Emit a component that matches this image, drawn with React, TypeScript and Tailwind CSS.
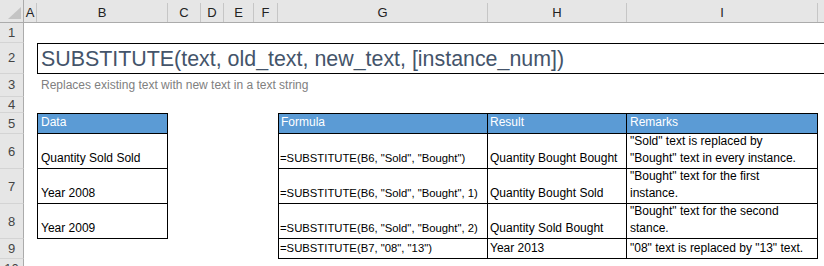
import React from "react";

const font = { fontFamily: '"Liberation Sans", Arial, sans-serif' };

const HEAD_COLS: { l: string; w: string }[] = [
  { l: "A", w: "w-[13px]" },
  { l: "B", w: "w-[131px]" },
  { l: "C", w: "w-[33px]" },
  { l: "D", w: "w-[23px]" },
  { l: "E", w: "w-[30px]" },
  { l: "F", w: "w-[24px]" },
  { l: "G", w: "w-[210px]" },
  { l: "H", w: "w-[139px]" },
  { l: "I", w: "w-[191px]" },
];

function RowHead({ n, h }: { n: number; h: string }) {
  return (
    <div
      className={`${h} w-[24px] shrink-0 bg-[#e6e6e6] border-r border-b border-r-[#ababab] border-b-[#d4d4d4] flex items-center justify-center text-[13px] text-[#444444]`}
    >
      {n}
    </div>
  );
}

function Cell({
  w,
  cls = "",
  children,
}: {
  w: string;
  cls?: string;
  children?: React.ReactNode;
}) {
  return (
    <div
      className={`${w} shrink-0 h-full flex flex-col justify-end overflow-hidden whitespace-nowrap ${cls}`}
    >
      {children}
    </div>
  );
}

const tb = "border-black";

export default function App() {
  const body = "text-[12px] text-black leading-[17px]";
  return (
    <div
      className="w-[824px] h-[266px] overflow-hidden bg-white flex flex-col"
      style={font}
    >
      {/* Column header */}
      <div className="h-[23px] shrink-0 flex items-end bg-[#e6e6e6] border-b border-[#ababab]">
        <div className="w-[24px] h-[22px] shrink-0 flex items-start border-r border-[#ababab]">
          <svg width="23" height="22" viewBox="0 0 23 22">
            <polygon points="21,7 21,19 8,19" fill="#c4c4c4" />
          </svg>
        </div>
        {HEAD_COLS.map((c) => (
          <div
            key={c.l}
            className={`${c.w} h-[19px] shrink-0 border-r border-[#c6c6c6] flex items-center justify-center text-[13px] text-[#222222]`}
          >
            {c.l}
          </div>
        ))}
        <div className="flex-1" />
      </div>

      {/* Row 1 */}
      <div className="h-[20px] shrink-0 flex">
        <RowHead n={1} h="h-[20px]" />
      </div>

      {/* Row 2 title */}
      <div className="h-[31px] shrink-0 flex">
        <RowHead n={2} h="h-[31px]" />
        <Cell w="w-[13px]" />
        <div className="flex-1 h-full border-l border-t border-b border-black flex items-end pl-[3px] pb-[1px] overflow-hidden whitespace-nowrap">
          <span className="text-[21.4px] leading-[26px] text-[#44546a]">
            SUBSTITUTE(text, old_text, new_text, [instance_num])
          </span>
        </div>
      </div>

      {/* Row 3 subtitle */}
      <div className="h-[23px] shrink-0 flex">
        <RowHead n={3} h="h-[23px]" />
        <Cell w="w-[13px]" />
        <div className="flex-1 h-full flex items-center pl-[4px] pb-[2px] text-[12px] text-[#808080] whitespace-nowrap">
          Replaces existing text with new text in a text string
        </div>
      </div>

      {/* Row 4 */}
      <div className="h-[16px] shrink-0 flex">
        <RowHead n={4} h="h-[16px]" />
      </div>

      {/* Row 5 headers */}
      <div className={`h-[21px] shrink-0 flex ${body}`}>
        <RowHead n={5} h="h-[21px]" />
        <Cell w="w-[13px]" />
        <Cell
          w="w-[131px]"
          cls={`bg-[#5b9bd5] text-white border ${tb} pl-[3px] pb-[2px]`}
        >
          Data
        </Cell>
        <Cell w="w-[86px]" />
        <Cell w="w-[24px]" />
        <Cell
          w="w-[210px]"
          cls={`bg-[#5b9bd5] text-white border ${tb} pl-[2px] pb-[2px]`}
        >
          Formula
        </Cell>
        <Cell
          w="w-[139px]"
          cls={`bg-[#5b9bd5] text-white border-t border-b border-r ${tb} pl-[2px] pb-[2px]`}
        >
          Result
        </Cell>
        <Cell
          w="w-[191px]"
          cls={`bg-[#5b9bd5] text-white border-t border-b border-r ${tb} pl-[3px] pb-[2px]`}
        >
          Remarks
        </Cell>
      </div>

      {/* Rows 6-9 */}
      {[
        {
          n: 6,
          h: "h-[35px]",
          data: "Quantity Sold Sold",
          f: '=SUBSTITUTE(B6, "Sold", "Bought")',
          r: "Quantity Bought Bought",
          m: ['"Sold" text is replaced by', '"Bought" text in every instance.'],
        },
        {
          n: 7,
          h: "h-[35px]",
          data: "Year 2008",
          f: '=SUBSTITUTE(B6, "Sold", "Bought", 1)',
          r: "Quantity Bought Sold",
          m: ['"Bought" text for the first', "instance."],
        },
        {
          n: 8,
          h: "h-[35px]",
          data: "Year 2009",
          f: '=SUBSTITUTE(B6, "Sold", "Bought", 2)',
          r: "Quantity Sold Bought",
          m: ['"Bought" text for the second', "stance."],
        },
        {
          n: 9,
          h: "h-[20px]",
          data: null,
          f: '=SUBSTITUTE(B7, "08", "13")',
          r: "Year 2013",
          m: ['"08" text is replaced by "13" text.'],
        },
      ].map((row) => (
        <div key={row.n} className={`${row.h} shrink-0 flex ${body}`}>
          <RowHead n={row.n} h={row.h} />
          <Cell w="w-[13px]" />
          {row.data !== null ? (
            <Cell
              w="w-[131px]"
              cls={`border-l border-r border-b ${tb} pl-[3px] pb-[1px]`}
            >
              {row.data}
            </Cell>
          ) : (
            <Cell w="w-[131px]" />
          )}
          <Cell w="w-[86px]" />
          <Cell w="w-[24px]" />
          <Cell
            w="w-[210px]"
            cls={`border-l border-r border-b ${tb} pl-[1px] pb-[1px] text-[11.3px]`}
          >
            {row.f}
          </Cell>
          <Cell
            w="w-[139px]"
            cls={`border-r border-b ${tb} pl-[2px] pb-[1px]`}
          >
            {row.r}
          </Cell>
          <Cell
            w="w-[191px]"
            cls={`border-r border-b ${tb} pl-[3px] pb-[1px]`}
          >
            {row.m.map((t, i) => (
              <div key={i}>{t}</div>
            ))}
          </Cell>
        </div>
      ))}

      {/* Row 10 */}
      <div className="h-[20px] shrink-0 flex">
        <RowHead n={10} h="h-[20px]" />
      </div>
    </div>
  );
}
